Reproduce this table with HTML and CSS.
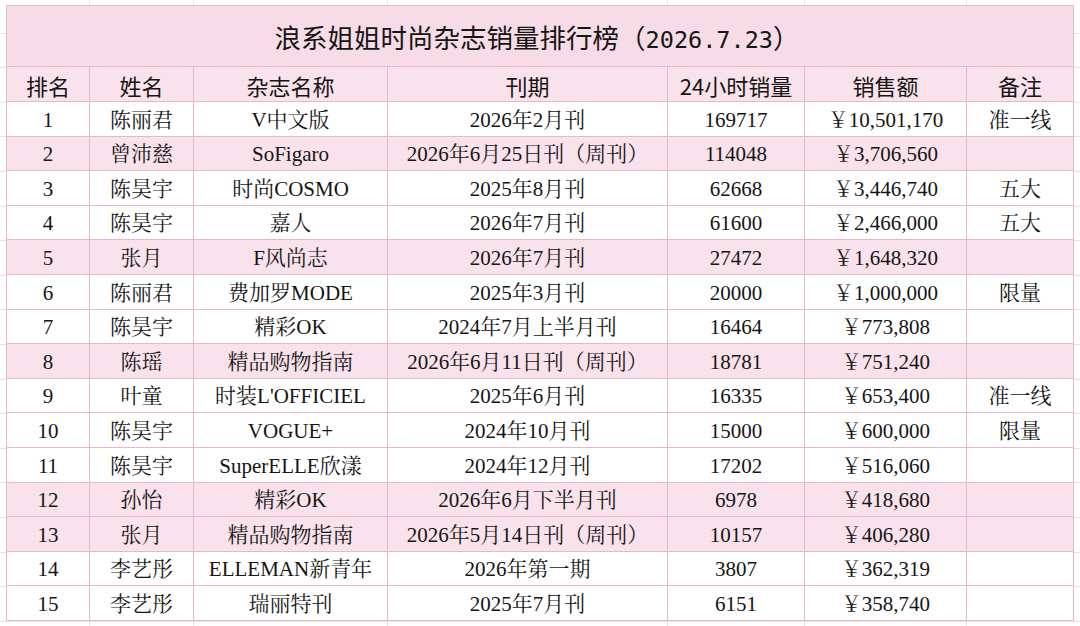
FILE: index.html
```html
<!DOCTYPE html>
<html lang="zh-CN">
<head>
<meta charset="utf-8">
<title>浪系姐姐时尚杂志销量排行榜</title>
<link rel="stylesheet" href="styles.css">
</head>
<body>
<div class="sheet">
<table class="rank">
  <colgroup>
    <col class="c-rank"><col class="c-name"><col class="c-mag"><col class="c-issue"><col class="c-sales"><col class="c-amount"><col class="c-note">
  </colgroup>
  <tr class="title-row"><td colspan="7">浪系姐姐时尚杂志销量排行榜（<span class="mono">2026.7.23</span>）</td></tr>
  <tr class="head-row"><th>排名</th><th>姓名</th><th>杂志名称</th><th>刊期</th><th>24小时销量</th><th>销售额</th><th>备注</th></tr>
  <tr><td>1</td><td>陈丽君</td><td>V中文版</td><td>2026年2月刊</td><td>169717</td><td>￥10,501,170</td><td>准一线</td></tr>
  <tr class="pink"><td>2</td><td>曾沛慈</td><td>SoFigaro</td><td>2026年6月25日刊（周刊）</td><td>114048</td><td>￥3,706,560</td><td></td></tr>
  <tr><td>3</td><td>陈昊宇</td><td>时尚COSMO</td><td>2025年8月刊</td><td>62668</td><td>￥3,446,740</td><td>五大</td></tr>
  <tr><td>4</td><td>陈昊宇</td><td>嘉人</td><td>2026年7月刊</td><td>61600</td><td>￥2,466,000</td><td>五大</td></tr>
  <tr class="pink"><td>5</td><td>张月</td><td>F风尚志</td><td>2026年7月刊</td><td>27472</td><td>￥1,648,320</td><td></td></tr>
  <tr><td>6</td><td>陈丽君</td><td>费加罗MODE</td><td>2025年3月刊</td><td>20000</td><td>￥1,000,000</td><td>限量</td></tr>
  <tr><td>7</td><td>陈昊宇</td><td>精彩OK</td><td>2024年7月上半月刊</td><td>16464</td><td>￥773,808</td><td></td></tr>
  <tr class="pink"><td>8</td><td>陈瑶</td><td>精品购物指南</td><td>2026年6月11日刊（周刊）</td><td>18781</td><td>￥751,240</td><td></td></tr>
  <tr><td>9</td><td>叶童</td><td>时装L'OFFICIEL</td><td>2025年6月刊</td><td>16335</td><td>￥653,400</td><td>准一线</td></tr>
  <tr><td>10</td><td>陈昊宇</td><td>VOGUE+</td><td>2024年10月刊</td><td>15000</td><td>￥600,000</td><td>限量</td></tr>
  <tr><td>11</td><td>陈昊宇</td><td>SuperELLE欣漾</td><td>2024年12月刊</td><td>17202</td><td>￥516,060</td><td></td></tr>
  <tr class="pink"><td>12</td><td>孙怡</td><td>精彩OK</td><td>2026年6月下半月刊</td><td>6978</td><td>￥418,680</td><td></td></tr>
  <tr class="pink"><td>13</td><td>张月</td><td>精品购物指南</td><td>2026年5月14日刊（周刊）</td><td>10157</td><td>￥406,280</td><td></td></tr>
  <tr><td>14</td><td>李艺彤</td><td>ELLEMAN新青年</td><td>2026年第一期</td><td>3807</td><td>￥362,319</td><td></td></tr>
  <tr><td>15</td><td>李艺彤</td><td>瑞丽特刊</td><td>2025年7月刊</td><td>6151</td><td>￥358,740</td><td></td></tr>
</table>
</div>
</body>
</html>
```
FILE: styles.css
```css
html, body {
  margin: 0;
  padding: 0;
  background: #ffffff;
}

body {
  width: 1080px;
  height: 626px;
  overflow: hidden;
  background-color: #ffffff;
  background-image:
    linear-gradient(#e4e4e4, #e4e4e4),
    linear-gradient(#e4e4e4, #e4e4e4),
    linear-gradient(#e4e4e4, #e4e4e4),
    linear-gradient(#e4e4e4, #e4e4e4),
    linear-gradient(#e4e4e4, #e4e4e4),
    linear-gradient(#e4e4e4, #e4e4e4),
    repeating-linear-gradient(to bottom, transparent 0, transparent 33.6px, #e4e4e4 33.6px, #e4e4e4 34.6px);
  background-size: 1px 100%, 1px 100%, 1px 100%, 1px 100%, 1px 100%, 1px 100%, 100% 100%;
  background-position: 89px 0, 193px 0, 387px 0, 667px 0, 804px 0, 966px 0, 0 -1px;
  background-repeat: no-repeat;
}

.sheet {
  padding: 5px 7px 0 6px;
}

.rank {
  width: 1067px;
  table-layout: fixed;
  border-collapse: collapse;
  background: #ffffff;
  color: #151515;
}

.c-rank { width: 83px; }
.c-name { width: 104px; }
.c-mag { width: 194px; }
.c-issue { width: 280px; }
.c-sales { width: 137px; }
.c-amount { width: 162px; }
.c-note { width: 107px; }

.rank td,
.rank th {
  border: 1px solid #e6b8ca;
  padding: 0;
  text-align: center;
  vertical-align: middle;
  white-space: nowrap;
}

.rank td {
  font-family: "Liberation Serif", "Noto Serif CJK SC", "Noto Sans CJK SC", serif;
  font-size: 21px;
  line-height: 1.2;
  padding-top: 3px;
}

.rank tr {
  height: 34.6px;
}

.rank .title-row {
  height: 61px;
}

.rank .title-row td {
  background: #f7dbe6;
  font-family: "Noto Sans CJK SC", sans-serif;
  font-size: 26.5px;
  font-weight: 400;
  line-height: 1.2;
  padding-top: 4px;
  padding-right: 6px;
}

.mono {
  font-family: "DejaVu Sans Mono", monospace;
  font-size: 23.5px;
}

.rank .head-row {
  height: 35px;
}

.rank .head-row th {
  background: #f9e2eb;
  font-family: "Noto Sans CJK SC", sans-serif;
  font-size: 22px;
  font-weight: 400;
  line-height: 1.2;
  padding-top: 3px;
}

.rank .pink td {
  background: #f9e2eb;
}
```
